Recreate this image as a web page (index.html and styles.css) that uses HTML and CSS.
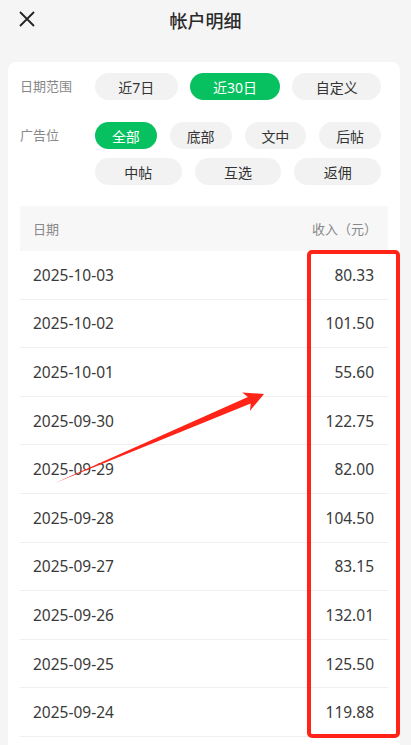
FILE: index.html
```html
<!DOCTYPE html>
<html lang="zh-CN">
<head>
<meta charset="UTF-8">
<title>帐户明细</title>
<link rel="stylesheet" href="styles.css">
</head>
<body>
<div class="topbar">
    <span class="close">
        <svg width="16" height="16" viewBox="0 0 16 16"><path d="M1 1L15 15M15 1L1 15" stroke="#222" stroke-width="1.8" fill="none"/></svg>
    </span>
    <h1>帐户明细</h1>
    <span></span>
</div>
<div class="card">
    <div class="filter">
        <div class="filter-label">日期范围</div>
        <div class="filter-opts">
            <div class="opt-row range">
                <span class="opt">近7日</span>
                <span class="opt on">近30日</span>
                <span class="opt">自定义</span>
            </div>
        </div>
    </div>
    <div class="filter">
        <div class="filter-label">广告位</div>
        <div class="filter-opts">
            <div class="opt-row">
                <span class="opt on">全部</span>
                <span class="opt">底部</span>
                <span class="opt">文中</span>
                <span class="opt">后帖</span>
            </div>
            <div class="opt-row">
                <span class="opt">中帖</span>
                <span class="opt">互选</span>
                <span class="opt">返佣</span>
            </div>
        </div>
    </div>
    <div class="table">
        <div class="thead"><span>日期</span><span>收入（元）</span></div>
        <div class="row"><span>2025-10-03</span><span>80.33</span></div>
        <div class="row"><span>2025-10-02</span><span>101.50</span></div>
        <div class="row"><span>2025-10-01</span><span>55.60</span></div>
        <div class="row"><span>2025-09-30</span><span>122.75</span></div>
        <div class="row"><span>2025-09-29</span><span>82.00</span></div>
        <div class="row"><span>2025-09-28</span><span>104.50</span></div>
        <div class="row"><span>2025-09-27</span><span>83.15</span></div>
        <div class="row"><span>2025-09-26</span><span>132.01</span></div>
        <div class="row"><span>2025-09-25</span><span>125.50</span></div>
        <div class="row"><span>2025-09-24</span><span>119.88</span></div>
    </div>
</div>
<div class="mark-box"></div>
<svg class="mark-arrow" width="411" height="745" viewBox="0 0 411 745">
    <polygon points="55,483 247.9,397 242.2,392.4 264,394 250,410.8 250.7,403.4" fill="#ff2318"/>
</svg>
</body>
</html>
```

FILE: styles.css
```css
body {
    margin: 0;
    background: #f5f5f5;
    font-family: "Noto Sans", "Noto Sans CJK SC", sans-serif;
    color: #333;
}
.topbar {
    display: grid;
    grid-template-columns: 1fr auto 1fr;
    align-items: center;
    height: 40px;
}
.close {
    display: flex;
    padding-left: 19px;
    margin-top: -3px;
}
h1 {
    margin: 0;
    font-size: 18px;
    font-weight: 500;
    color: #2a2a2a;
}
.card {
    margin: 22px 11px 0 8px;
    padding: 11px 12px 30px;
    background: #fff;
    border-radius: 8px 8px 0 0;
}
.filter {
    display: flex;
    padding-right: 7px;
}
.filter + .filter {
    margin-top: 22px;
}
.filter-label {
    flex: none;
    width: 75px;
    font-size: 13px;
    line-height: 27px;
    color: #888;
}
.filter-opts {
    flex: 1;
    display: flex;
    flex-direction: column;
    gap: 9px;
}
.opt-row {
    display: flex;
    gap: 13px;
}
.opt {
    flex: 1;
    height: 27px;
    border-radius: 14px;
    background: #f2f2f2;
    font-size: 14px;
    color: #333;
    display: flex;
    align-items: center;
    justify-content: center;
}
.range {
    gap: 12px;
}
.range .opt {
    flex: 1 1 auto;
}
.opt.on {
    background: #07c160;
    color: #fff;
}
.table {
    margin-top: 21px;
}
.thead {
    display: flex;
    justify-content: space-between;
    align-items: center;
    height: 45px;
    padding: 0 11px 0 13px;
    background: #f7f7f7;
    font-size: 13px;
    color: #888;
}
.row {
    display: flex;
    justify-content: space-between;
    align-items: center;
    height: 48.6px;
    box-sizing: border-box;
    padding: 0 14px 0 13px;
    border-bottom: 1px solid #efefef;
    font-size: 15.5px;
    color: #3a3a3a;
}
.mark-box {
    position: absolute;
    left: 307px;
    top: 250px;
    width: 93px;
    height: 488px;
    box-sizing: border-box;
    border: 4px solid #ff2318;
    border-radius: 5px;
}
.mark-arrow {
    position: absolute;
    left: 0;
    top: 0;
}
```
